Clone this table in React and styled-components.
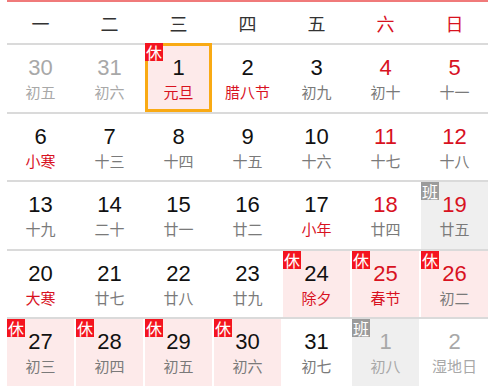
import React from 'react';
import styled, {createGlobalStyle, css} from 'styled-components';

const red = '#d8121f';
const cjk = '"Noto Sans CJK SC", "Liberation Sans", sans-serif';

const GlobalStyle = createGlobalStyle`
  html, body {
    margin: 0;
    padding: 0;
    background: #fff;
  }
`;

/////////////// LAYOUT /////////////
const Calendar = styled.div`
  width: 481px;
  margin-left: 7px;
  border-top: 2px solid #f07a7a;
`;

const HeaderRow = styled.div`
  display: grid;
  grid-template-columns: repeat(7, 67px);
  column-gap: 2px;
  height: 41px;
  align-items: center;
`;

const WeekDay = styled.div`
  text-align: center;
  font-family: ${cjk};
  font-size: 18px;
  color: ${props => (props.weekend ? red : '#333')};
`;

const Week = styled.div`
  display: grid;
  grid-template-columns: repeat(7, 67px);
  column-gap: 2px;
  height: 66.5px;
  border-top: 2px solid #dadada;
`;

/////////////// CELLS /////////////
const Cell = styled.div`
  position: relative;
  display: flex;
  flex-direction: column;
  align-items: center;
  padding-top: 11px;
  box-sizing: border-box;
  background: ${props =>
    props.kind === 'rest' ? '#fdeaea' : props.kind === 'work' ? '#efefef' : 'transparent'};
  ${props =>
    props.selected &&
    css`
      margin-top: -2px;
      border: 3px solid #f9aa14;
      padding-top: 10px;
    `}
`;

const Num = styled.div`
  font-family: 'Liberation Sans', Arial, sans-serif;
  font-size: 22px;
  line-height: 24px;
  color: ${props =>
    props.tone === 'red' ? red : props.tone === 'muted' ? '#a8a8a8' : '#111'};
`;

const Lunar = styled.div`
  margin-top: 2px;
  font-family: ${cjk};
  font-size: 15px;
  line-height: 20px;
  color: ${props =>
    props.tone === 'red' ? red : props.tone === 'muted' ? '#a8a8a8' : '#7a7a7a'};
`;

const Badge = styled.span`
  position: absolute;
  top: ${props => (props.inset ? '-3px' : '0')};
  left: ${props => (props.inset ? '-3px' : '0')};
  width: 18px;
  height: 18px;
  font-family: ${cjk};
  font-size: 16px;
  line-height: 18px;
  text-align: center;
  color: #fff;
  background: ${props => (props.kind === 'work' ? '#9b9b9b' : '#f4141f')};
`;

/////////////// DATA /////////////
const weekDays = ['一', '二', '三', '四', '五', '六', '日'];

// n: number, l: lunar, nt/lt: tone, k: rest|work, s: selected
const weeks = [
  [
    {n: 30, l: '初五', nt: 'muted', lt: 'muted'},
    {n: 31, l: '初六', nt: 'muted', lt: 'muted'},
    {n: 1, l: '元旦', lt: 'red', k: 'rest', s: true},
    {n: 2, l: '腊八节', lt: 'red'},
    {n: 3, l: '初九'},
    {n: 4, l: '初十', nt: 'red'},
    {n: 5, l: '十一', nt: 'red'},
  ],
  [
    {n: 6, l: '小寒', lt: 'red'},
    {n: 7, l: '十三'},
    {n: 8, l: '十四'},
    {n: 9, l: '十五'},
    {n: 10, l: '十六'},
    {n: 11, l: '十七', nt: 'red'},
    {n: 12, l: '十八', nt: 'red'},
  ],
  [
    {n: 13, l: '十九'},
    {n: 14, l: '二十'},
    {n: 15, l: '廿一'},
    {n: 16, l: '廿二'},
    {n: 17, l: '小年', lt: 'red'},
    {n: 18, l: '廿四', nt: 'red'},
    {n: 19, l: '廿五', nt: 'red', k: 'work'},
  ],
  [
    {n: 20, l: '大寒', lt: 'red'},
    {n: 21, l: '廿七'},
    {n: 22, l: '廿八'},
    {n: 23, l: '廿九'},
    {n: 24, l: '除夕', lt: 'red', k: 'rest'},
    {n: 25, l: '春节', nt: 'red', lt: 'red', k: 'rest'},
    {n: 26, l: '初二', nt: 'red', k: 'rest'},
  ],
  [
    {n: 27, l: '初三', k: 'rest'},
    {n: 28, l: '初四', k: 'rest'},
    {n: 29, l: '初五', k: 'rest'},
    {n: 30, l: '初六', k: 'rest'},
    {n: 31, l: '初七'},
    {n: 1, l: '初八', nt: 'muted', lt: 'muted', k: 'work'},
    {n: 2, l: '湿地日', nt: 'muted', lt: 'muted'},
  ],
];

const Day = ({d}) => (
  <Cell kind={d.k} selected={d.s}>
    {d.k && (
      <Badge kind={d.k} inset={d.s}>
        {d.k === 'rest' ? '休' : '班'}
      </Badge>
    )}
    <Num tone={d.nt}>{d.n}</Num>
    <Lunar tone={d.lt}>{d.l}</Lunar>
  </Cell>
);

export default function App() {
  return (
    <>
      <GlobalStyle />
      <Calendar>
        <HeaderRow>
          {weekDays.map((w, i) => (
            <WeekDay key={w} weekend={i > 4}>
              {w}
            </WeekDay>
          ))}
        </HeaderRow>
        {weeks.map((week, i) => (
          <Week key={i}>
            {week.map((d, j) => (
              <Day key={j} d={d} />
            ))}
          </Week>
        ))}
      </Calendar>
    </>
  );
}
